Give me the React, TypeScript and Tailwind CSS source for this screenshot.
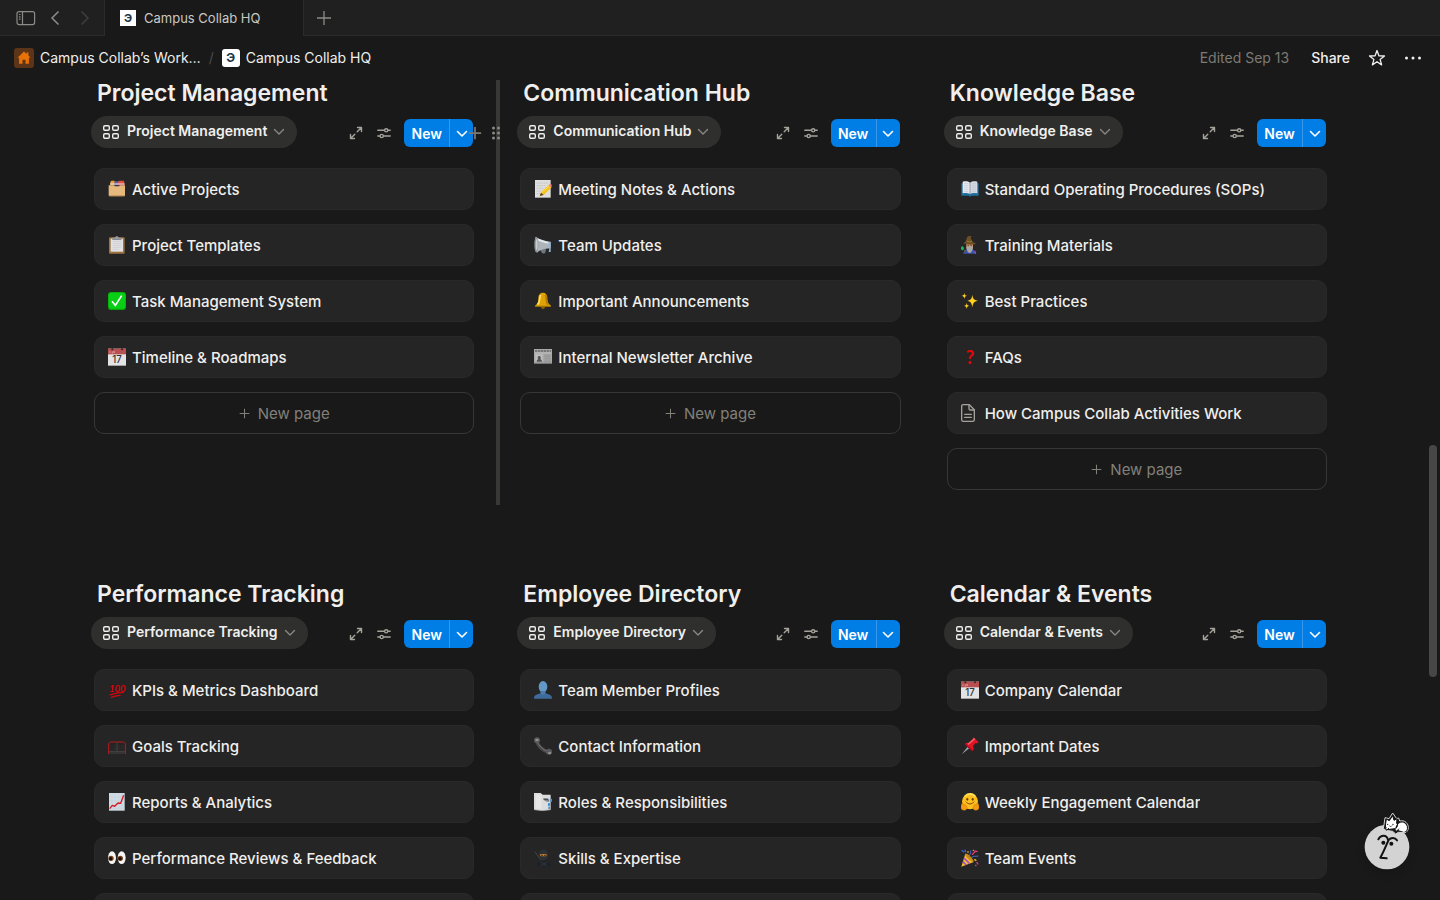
import type { ReactNode } from "react";

type Card = { icon: string; title: string };
type Board = { title: string; cards: Card[]; active?: boolean; more?: boolean };

const overview: Board[] = [
  {
    title: "Project Management",
    cards: [
      { icon: "dividers", title: "Active Projects" },
      { icon: "clipboard", title: "Project Templates" },
      { icon: "check", title: "Task Management System" },
      { icon: "calendar", title: "Timeline & Roadmaps" },
    ],
  },
  {
    title: "Communication Hub",
    active: true,
    cards: [
      { icon: "memo", title: "Meeting Notes & Actions" },
      { icon: "megaphone", title: "Team Updates" },
      { icon: "bell", title: "Important Announcements" },
      { icon: "newspaper", title: "Internal Newsletter Archive" },
    ],
  },
  {
    title: "Knowledge Base",
    cards: [
      { icon: "book", title: "Standard Operating Procedures (SOPs)" },
      { icon: "wizard", title: "Training Materials" },
      { icon: "sparkles", title: "Best Practices" },
      { icon: "question", title: "FAQs" },
      { icon: "page", title: "How Campus Collab Activities Work" },
    ],
  },
];

const people: Board[] = [
  {
    title: "Performance Tracking",
    more: true,
    cards: [
      { icon: "hundred", title: "KPIs & Metrics Dashboard" },
      { icon: "goal", title: "Goals Tracking" },
      { icon: "chart", title: "Reports & Analytics" },
      { icon: "eyes", title: "Performance Reviews & Feedback" },
    ],
  },
  {
    title: "Employee Directory",
    more: true,
    cards: [
      { icon: "person", title: "Team Member Profiles" },
      { icon: "phone", title: "Contact Information" },
      { icon: "tabs", title: "Roles & Responsibilities" },
      { icon: "ninja", title: "Skills & Expertise" },
    ],
  },
  {
    title: "Calendar & Events",
    more: true,
    cards: [
      { icon: "calendar", title: "Company Calendar" },
      { icon: "pin", title: "Important Dates" },
      { icon: "hug", title: "Weekly Engagement Calendar" },
      { icon: "party", title: "Team Events" },
    ],
  },
];

const art: Record<string, ReactNode> = {
  dividers: (
    <>
      <path d="M7 16V6l3-4h10v14z" fill="#f0a03c" />
      <path d="M20 4h14v12H20z" fill="#5b62c4" />
      <path d="M30 6l4-4h14l2 14H30z" fill="#e2523f" />
      <path d="M6 12h44" stroke="#e9e4ee" strokeWidth="3" />
      <path d="M2 16h16l3 3h12l3-3h15v30a3 3 0 0 1-3 3H5a3 3 0 0 1-3-3z" fill="#e5b87d" />
      <path d="M3 47h47" stroke="#c49357" strokeWidth="3" />
    </>
  ),
  clipboard: (
    <>
      <rect x="3" y="4" width="47" height="49" rx="3" fill="#9b7440" />
      <rect x="8" y="8" width="37" height="39" fill="#e2e2e4" />
      <path d="M13 16h27M13 22h27M13 28h27M13 34h27M13 40h20" stroke="#c9c9cd" strokeWidth="2" />
      <path d="M13 11V5h8c0-6 11-6 11 0h8v6z" fill="#9a9da3" />
      <path d="M13 10h27" stroke="#6e7177" strokeWidth="2" />
    </>
  ),
  check: (
    <>
      <rect width="54" height="54" rx="9" fill="#06a806" />
      <rect x="2" y="2" width="50" height="48" rx="8" fill="#08cf16" />
      <path d="M12 28l10 12L41 11" fill="none" stroke="#fff" strokeWidth="5" />
    </>
  ),
  calendar: (
    <>
      <path d="M0 2h54v51H0z" fill="#e3e3e5" />
      <path d="M0 2h54v17H0z" fill="#b84f50" />
      <path d="M6 15V9M11 15h4V9M19 9v6" stroke="#e9b4b4" strokeWidth="2" fill="none" />
      <circle cx="13" cy="4" r="3" fill="#3b2022" />
      <circle cx="42" cy="4" r="3" fill="#3b2022" />
      <text x="27" y="46" textAnchor="middle" fontSize="29" fontWeight="500" fill="#333" fontFamily="Inter, sans-serif">17</text>
    </>
  ),
  memo: (
    <>
      <rect x="3" y="0" width="47" height="53" fill="#dededf" />
      <path d="M8 9h36M8 17h28M8 25h20M8 33h14M8 41h10" stroke="#b6b6ba" strokeWidth="2" strokeDasharray="5 2" />
      <path d="M18 47l4-12 23-21 8 8-23 22z" fill="#f6c21c" />
      <path d="M20 41l26-23" stroke="#ffdf5c" strokeWidth="3" />
      <path d="M44 15l4-3c4-1 6 3 5 7l-3 3z" fill="#ef7f86" />
      <path d="M17 48l4-10 8 7z" fill="#584121" />
    </>
  ),
  megaphone: (
    <>
      <path d="M20 36l16 2c0 12-5 17-10 14-4-2-7-7-6-16z" fill="#6d7782" />
      <path d="M4 2c12 7 26 12 46 15v20C30 38 18 42 9 50z" fill="#aeb4ba" />
      <path d="M8 8c12 7 24 10 38 13" stroke="#e7eaed" strokeWidth="5" fill="none" />
      <ellipse cx="7" cy="26" rx="6" ry="24" fill="#8b9198" />
      <ellipse cx="8" cy="26" rx="3" ry="17" fill="#c9cdd1" />
      <path d="M42 19l8-1v30h-6c3-11 3-18-2-29z" fill="#8fb9dc" />
    </>
  ),
  bell: (
    <>
      <circle cx="27" cy="45" r="6" fill="#8e6403" />
      <path d="M27 2c8 0 13 6 13 16 0 13 4 18 10 22v5H4v-5c6-4 9-9 9-22C13 8 19 2 27 2z" fill="#e0a307" />
      <path d="M20 9c-4 8-1 20-9 29" stroke="#ffe16a" strokeWidth="5" fill="none" />
      <path d="M34 9c5 10 0 18 8 30" stroke="#b47903" strokeWidth="5" fill="none" />
      <path d="M4 43h46" stroke="#8e6403" strokeWidth="3" />
    </>
  ),
  newspaper: (
    <>
      <path d="M0 3h54v45H0z" fill="#a8a8a8" />
      <path d="M3 9h48" stroke="#666" strokeWidth="4" strokeDasharray="7 2" />
      <path d="M2 15h50" stroke="#ccc" strokeWidth="2" />
      <rect x="4" y="19" width="22" height="22" fill="#bdbdbd" />
      <path d="M8 41c0-5 3-7 5-7-4-5-1-10 3-10s6 5 3 10c3 0 5 3 5 7z" fill="#555" />
      <path d="M31 21h19M31 26h19M31 31h19M31 36h19M31 41h19" stroke="#8c8c8c" strokeWidth="2" />
      <path d="M0 46h54" stroke="#6b6b6b" strokeWidth="3" />
    </>
  ),
  book: (
    <>
      <path d="M1 10h52v37H31l-4 3-4-3H1z" fill="#216f9c" />
      <path d="M5 5c9-2 16-1 22 3v34c-6-4-13-4-22-2z" fill="#e8eaf0" />
      <path d="M49 5c-9-2-16-1-22 3v34c6-4 13-4 22-2z" fill="#d7dae4" />
      <path d="M9 11h13M9 17h13M9 23h13M9 29h13M9 35h13M32 11h13M32 17h13M32 23h13M32 29h13M32 35h13" stroke="#bcc1cf" strokeWidth="2" />
      <path d="M27 8v35" stroke="#70798b" strokeWidth="2" />
    </>
  ),
  wizard: (
    <>
      <path d="M7 53c1-10 8-14 18-14s19 4 20 14z" fill="#3b55ad" />
      <path d="M16 22h20v15c-3 7-16 7-20 0z" fill="#c99570" />
      <path d="M16 33c5-3 15-3 20 0-1 11-5 18-10 18s-9-7-10-18z" fill="#aaa8a6" />
      <path d="M20 29h3M29 29h3" stroke="#382116" strokeWidth="3" />
      <path d="M7 22c7-4 9-9 11-18 3-4 9-5 14-3l-3 4c3 7 5 13 13 16l3 3c-12 3-27 3-38-2z" fill="#6b5026" />
      <path d="M17 15c6 3 12 3 16 0" stroke="#a1782f" strokeWidth="3" fill="none" />
      <path d="M5 32l8 18" stroke="#6c4e2c" strokeWidth="3" />
      <ellipse cx="4" cy="37" rx="4" ry="6" fill="#19ba66" />
      <path d="M41 45l3 8" stroke="#8f51b6" strokeWidth="4" />
    </>
  ),
  sparkles: (
    <g fill="#ffcf22">
      <path d="M34 8c2 12 4 16 17 18-13 3-15 7-17 20-2-13-4-17-15-20 11-2 13-6 15-18z" />
      <path d="M10 2c1 7 2 8 8 9-6 2-7 3-8 10-1-7-2-8-8-10 6-1 7-2 8-9z" />
      <path d="M17 32c1 7 2 8 8 9-6 2-7 3-8 10-1-7-2-8-8-10 6-1 7-2 8-9z" />
    </g>
  ),
  question: (
    <text x="27" y="47" textAnchor="middle" fontSize="55" fontWeight="700" fill="#e60505" fontFamily="Lato, sans-serif">?</text>
  ),
  page: (
    <g fill="none" stroke="#a5a29a" strokeWidth="4" strokeLinejoin="round" strokeLinecap="round">
      <path d="M7 2h18l15 15v30a5 5 0 0 1-5 5H7a5 5 0 0 1-5-5V7a5 5 0 0 1 5-5z" />
      <path d="M24 3v11a4 4 0 0 0 4 4h11M11 31h20M11 40h20" />
    </g>
  ),
  hundred: (
    <>
      <text x="28" y="32" textAnchor="middle" fontSize="29" fontWeight="700" fontStyle="italic" fill="#d3060e" fontFamily="Lato, sans-serif">100</text>
      <path d="M6 42c12-5 24-7 40-8M10 49c9-4 17-5 26-6" stroke="#d3060e" strokeWidth="4" fill="none" strokeLinecap="round" />
    </>
  ),
  goal: (
    <>
      <path d="M5 40l7-21h30l7 21z" fill="#232323" />
      <path d="M12 20v20M20 20v20M34 20v20M42 20v20M6 28h42M6 35h42" stroke="#393939" strokeWidth="1" />
      <path d="M27 18v24" stroke="#555" strokeWidth="2" />
      <path d="M4 48h46M3 43h48" stroke="#555" strokeWidth="2" />
      <path d="M2 51V21c0-4 4-6 8-6h34c4 0 8 2 8 6v30" stroke="#bd1a1d" strokeWidth="3" fill="none" />
    </>
  ),
  chart: (
    <>
      <rect x="3" y="0" width="47" height="53" fill="#cfdae3" />
      <path d="M12 0v53M22 0v53M32 0v53M42 0v53M3 12h47M3 24h47M3 36h47M3 46h47" stroke="#bccad5" strokeWidth="1" />
      <path d="M5 47l8-10 7 3 10-10 8 1L47 7" stroke="#d51a24" strokeWidth="4" fill="none" strokeLinejoin="round" />
    </>
  ),
  eyes: (
    <>
      <ellipse cx="12" cy="26" rx="12" ry="19" fill="#f7f5f1" />
      <ellipse cx="41" cy="26" rx="12" ry="19" fill="#f7f5f1" />
      <circle cx="9" cy="28" r="8" fill="#76431a" />
      <circle cx="37" cy="28" r="8" fill="#76431a" />
      <circle cx="8" cy="29" r="5" fill="#160c06" />
      <circle cx="36" cy="29" r="5" fill="#160c06" />
    </>
  ),
  person: (
    <>
      <path d="M0 53c0-10 5-12 20-16V27h14v10c15 4 20 6 20 16z" fill="#3d6b9b" />
      <ellipse cx="27" cy="17" rx="13" ry="17" fill="#6398c6" />
      <path d="M20 30v8c4 4 10 4 14 0v-8z" fill="#4b7cab" />
    </>
  ),
  phone: (
    <>
      <path d="M7 9c4 17 19 31 38 37" stroke="#4a4a4c" strokeWidth="10" fill="none" />
      <path d="M10 15c5 12 16 22 29 28" stroke="#717174" strokeWidth="3" fill="none" />
      <ellipse cx="9" cy="10" rx="9" ry="9" fill="#59595b" />
      <ellipse cx="9" cy="9" rx="5" ry="4" fill="#8e8e90" />
      <ellipse cx="45" cy="44" rx="9" ry="9" fill="#59595b" />
      <ellipse cx="47" cy="48" rx="5" ry="4" fill="#8e8e90" />
    </>
  ),
  tabs: (
    <>
      <path d="M0 0h20l6 5h24v45l-25 3-25-3z" fill="#dcdcdc" />
      <path d="M5 5h17v43H5z" fill="#e6e6e6" />
      <path d="M27 16h15l4 4v6h-8l-8-4z" fill="#84888c" />
      <path d="M29 19h11l3 3" stroke="#45494d" strokeWidth="3" fill="none" />
      <path d="M49 17h5v9h-5zM42 30h6v9h-6zM43 41h5v7h-5z" fill="#3795e2" />
      <path d="M0 50l25 3 25-3" stroke="#aaa" strokeWidth="2" fill="none" />
    </>
  ),
  ninja: (
    <>
      <path d="M3 8l22 32" stroke="#43484c" strokeWidth="3" />
      <path d="M9 52c0-14 7-20 19-20s21 6 22 20z" fill="#1e2226" />
      <ellipse cx="28" cy="18" rx="14" ry="17" fill="#2c3136" />
      <rect x="18" y="15" width="20" height="7" rx="3" fill="#c07a2c" />
      <path d="M22 19h4M31 19h4" stroke="#1b120a" strokeWidth="3" />
      <path d="M17 37l22 14M41 38L20 51" stroke="#3b4147" strokeWidth="2" />
    </>
  ),
  pin: (
    <>
      <path d="M2 52l18-23 5 5z" fill="#98a4ad" />
      <path d="M12 20c5-4 10-3 15-1l9-9c-1-4-1-7 2-9l15 15c-3 3-6 3-9 2l-8 9c3 6 3 11-2 15z" fill="#df1526" />
      <path d="M21 22l20-17" stroke="#ff5b62" strokeWidth="5" />
      <path d="M13 22l21 19" stroke="#a50d1a" strokeWidth="4" />
    </>
  ),
  hug: (
    <>
      <circle cx="27" cy="25" r="24" fill="#fdbf1e" />
      <path d="M11 11c9-11 24-11 32 0" stroke="#ffe05a" strokeWidth="5" fill="none" />
      <ellipse cx="19" cy="19" rx="3" ry="4" fill="#6b3e09" />
      <ellipse cx="35" cy="19" rx="3" ry="4" fill="#6b3e09" />
      <path d="M15 27c7 8 17 8 24 0" stroke="#8c4b0b" strokeWidth="3" fill="none" strokeLinecap="round" />
      <path d="M2 32c3-4 5-1 6 4 3-4 7-1 8 3 4 2 3 12-5 13-8 0-13-4-11-13zM52 32c-3-4-5-1-6 4-3-4-7-1-8 3-4 2-3 12 5 13 8 0 13-4 11-13z" fill="#f49b13" stroke="#b86a08" strokeWidth="1" />
    </>
  ),
  party: (
    <>
      <path d="M13 14l25 25L1 53z" fill="#f6bf27" />
      <path d="M9 27l17 17M5 38l11 10" stroke="#a34bd0" strokeWidth="5" />
      <ellipse cx="25" cy="26" rx="5" ry="17" transform="rotate(-45 25 26)" fill="#c98a1c" />
      <path d="M25 24c-1-8 6-10 4-19M31 27c5-7 8-4 21-6" stroke="#4b72d8" strokeWidth="3" fill="none" />
      <path d="M34 18c1-7 8-5 8-12l8 2" stroke="#df3c75" strokeWidth="4" fill="none" />
      <path d="M2 4l8 6M12 2l2 7" stroke="#3f64d7" strokeWidth="4" />
      <path d="M40 31l6 4M20 7l2 4M36 3l2 2" stroke="#efc21e" strokeWidth="4" />
      <path d="M47 39l4 7M43 48l3 3" stroke="#cf3f8d" strokeWidth="4" />
    </>
  ),
};

function Emoji({ name }: { name: string }) {
  return (
    <svg viewBox="0 0 54 54" className="size-[18px] shrink-0" aria-hidden="true">
      {art[name]}
    </svg>
  );
}

function Chevron({ className }: { className: string }) {
  return (
    <svg viewBox="0 0 12 8" className={className} fill="none" stroke="currentColor" strokeLinecap="round" strokeLinejoin="round" aria-hidden="true">
      <path d="M1.5 1.5L6 6l4.5-4.5" />
    </svg>
  );
}

function Plus({ className }: { className: string }) {
  return (
    <svg viewBox="0 0 16 16" className={className} fill="none" stroke="currentColor" aria-hidden="true">
      <path d="M8 1v14M1 8h14" />
    </svg>
  );
}

function BoardColumn({ board }: { board: Board }) {
  return (
    <section className="relative min-w-0 pb-[15px]">
      {board.active && (
        <>
          <div className="absolute inset-y-0 -left-6 w-1 bg-[#383836]" />
          <button aria-label="Add block" className="absolute top-[46px] -left-[52px] text-[#7b7871]">
            <Plus className="size-[14px] stroke-2" />
          </button>
          <button aria-label="Drag column" className="absolute top-[45px] -left-[29px] text-[#8b8983]">
            <svg viewBox="0 0 10 16" className="h-4 w-[10px]" fill="currentColor" aria-hidden="true">
              <circle cx="2.5" cy="3" r="1.5" />
              <circle cx="7.5" cy="3" r="1.5" />
              <circle cx="2.5" cy="8" r="1.5" />
              <circle cx="7.5" cy="8" r="1.5" />
              <circle cx="2.5" cy="13" r="1.5" />
              <circle cx="7.5" cy="13" r="1.5" />
            </svg>
          </button>
        </>
      )}
      <h2 className="px-[3px] text-[23px] leading-[26px] font-semibold text-[#f0efed]">{board.title}</h2>
      <div className="mt-[10px] -ml-[3px] flex items-start justify-between pr-px">
        <button className="flex h-8 items-center rounded-full bg-[#2f2f2d] pr-3 pl-3 text-sm font-semibold text-[#f0efed]">
          <svg viewBox="0 0 16 16" className="mr-2 size-4" fill="none" stroke="currentColor" strokeWidth="1.4" aria-hidden="true">
            <rect x="0.7" y="1.7" width="5.6" height="4.6" rx="1.3" />
            <rect x="9.7" y="1.7" width="5.6" height="4.6" rx="1.3" />
            <rect x="0.7" y="9.7" width="5.6" height="4.6" rx="1.3" />
            <rect x="9.7" y="9.7" width="5.6" height="4.6" rx="1.3" />
          </svg>
          <span className="pb-0.5">{board.title}</span>
          <Chevron className="ml-1.5 h-2 w-3 stroke-[1.3] text-[#8d8a84]" />
        </button>
        <div className="mt-[3px] flex items-center text-[#a5a29a]">
          <button aria-label="Open full page" className="flex size-7 items-center justify-center">
            <svg viewBox="0 0 14 14" className="size-[14px]" fill="none" stroke="currentColor" strokeWidth="1.4" strokeLinecap="round" strokeLinejoin="round" aria-hidden="true">
              <path d="M8.200 5.800l4-4M8.500 1.500h4v4M5.800 8.200l-4 4M1.500 8.500v4h4" />
            </svg>
          </button>
          <button aria-label="View settings" className="flex size-7 items-center justify-center">
            <svg viewBox="0 0 14 14" className="size-[14px]" fill="none" stroke="currentColor" strokeWidth="1.4" strokeLinecap="round" aria-hidden="true">
              <path d="M.8 4.300h6.500M11.200 4.300h2M.8 10h2M6.700 10h6.500" />
              <circle cx="9.2" cy="4.3" r="1.6" />
              <circle cx="4.7" cy="10" r="1.6" />
            </svg>
          </button>
          <div className="ml-1.5 flex h-7 overflow-hidden rounded-md bg-[#007ee6] text-white">
            <button className="w-[46px] border-r border-[#3998ec] pt-0.5 text-sm font-semibold">New</button>
            <button aria-label="New page options" className="flex w-[23px] items-center justify-center">
              <Chevron className="mt-0.5 h-2 w-3 stroke-[1.6]" />
            </button>
          </div>
        </div>
      </div>
      <div className="mt-5 flex flex-col gap-[14px]">
        {board.cards.map((card) => (
          <a key={card.title} href="#" className="flex h-[42px] items-center gap-1.5 rounded-[10px] border border-[#292929] bg-[#252525] px-[13px] text-[15px] font-medium text-[#f0efed]">
            <Emoji name={card.icon} />
            <span className="truncate pt-0.5">{card.title}</span>
          </a>
        ))}
        {board.more ? (
          <div className="h-[42px] rounded-[10px] border border-[#292929] bg-[#252525]" />
        ) : (
          <button className="flex h-[42px] items-center justify-center gap-2 rounded-[10px] border border-[#373737] text-[15px] text-[#82807a]">
            <Plus className="size-[11px] stroke-[1.5]" />
            <span className="pt-[3px]">New page</span>
          </button>
        )}
      </div>
    </section>
  );
}

function BoardRow({ boards }: { boards: Board[] }) {
  return (
    <div className="grid shrink-0 grid-cols-3 gap-[46px]">
      {boards.map((board) => (
        <BoardColumn key={board.title} board={board} />
      ))}
    </div>
  );
}

function TabBar() {
  return (
    <nav className="flex h-9 shrink-0 bg-[#202020] text-[#8c8b88]">
      <div className="flex w-[105px] items-center border-r border-b border-[#2b2b2b] pl-4">
        <button aria-label="Toggle sidebar">
          <svg viewBox="0 0 20 16" className="h-4 w-5" fill="none" stroke="currentColor" strokeWidth="1.2" aria-hidden="true">
            <rect x="1" y="1.6" width="17.6" height="13" rx="2" />
            <path d="M6.500 1.600v13M3 4.500h1.500M3 6.800h1.500M3 9.100h1.500" />
          </svg>
        </button>
        <button aria-label="Back" className="ml-[14px]">
          <svg viewBox="0 0 10 16" className="h-4 w-[10px]" fill="none" stroke="currentColor" strokeWidth="1.5" aria-hidden="true">
            <path d="M8.500 1.500L2 8l6.500 6.500" />
          </svg>
        </button>
        <button aria-label="Forward" className="ml-5 text-[#3e3e3e]">
          <svg viewBox="0 0 10 16" className="h-4 w-[10px]" fill="none" stroke="currentColor" strokeWidth="1.5" aria-hidden="true">
            <path d="M1.500 1.500L8 8l-6.500 6.500" />
          </svg>
        </button>
      </div>
      <a href="#" className="flex w-[198px] items-center gap-2 bg-[#191919] pl-[15px] text-[13px] text-[#c9c8c5]">
        <span className="flex size-4 items-center justify-center bg-white text-[11px] leading-none font-bold text-[#213545]">Э</span>
        <span className="pt-0.5">Campus Collab HQ</span>
      </a>
      <div className="flex flex-1 items-center border-b border-l border-[#2b2b2b] pl-3">
        <button aria-label="New tab">
          <Plus className="size-4 stroke-[1.3]" />
        </button>
      </div>
    </nav>
  );
}

function TopBar() {
  return (
    <header className="flex h-11 shrink-0 items-center pr-[18px] pl-[14px] text-sm text-[#f0efed]">
      <a href="#" className="flex items-center gap-1.5">
        <svg viewBox="0 0 20 20" className="size-5" aria-hidden="true">
          <rect width="20" height="20" rx="3" fill="#5c3418" />
          <path d="M10 3.500l2.600 2.400V4.400h1.800v3.100L16.500 9.700h-1.600v6h-3.400v-3.900h-3v3.900H5.100v-6H3.500z" fill="#e97208" />
        </svg>
        Campus Collab’s Work…
      </a>
      <span className="mx-2 text-[#4b4b4b]">/</span>
      <a href="#" className="flex items-center gap-1.5">
        <span className="flex size-[18px] items-center justify-center rounded-[3px] bg-white text-xs leading-none font-bold text-[#213545]">Э</span>
        Campus Collab HQ
      </a>
      <span className="ml-auto text-[#7c7a75]">Edited Sep 13</span>
      <button className="ml-[22px] font-medium">Share</button>
      <button aria-label="Favorite" className="ml-[18px]">
        <svg viewBox="0 0 18 18" className="size-[18px]" fill="none" stroke="currentColor" strokeWidth="1.3" strokeLinejoin="round" aria-hidden="true">
          <path d="M9 1.500l1.900 5.300 5.600.2-4.400 3.400 1.500 5.500L9 12.700l-4.600 3.200 1.500-5.500L1.500 7l5.600-.2z" />
        </svg>
      </button>
      <button aria-label="More" className="ml-[18px]">
        <svg viewBox="0 0 18 18" className="size-[18px]" fill="currentColor" aria-hidden="true">
          <circle cx="2.5" cy="9" r="1.5" />
          <circle cx="9" cy="9" r="1.5" />
          <circle cx="15.5" cy="9" r="1.5" />
        </svg>
      </button>
    </header>
  );
}

function Assistant() {
  return (
    <button aria-label="Assistant" className="fixed right-[30px] bottom-[30px]">
      <svg viewBox="72 66 138 174" className="h-[58px] w-[46px] drop-shadow-lg" fill="none" strokeLinecap="round" strokeLinejoin="round" aria-hidden="true">
        <circle cx="141" cy="171" r="67" fill="#d3d3d3" />
        <g stroke="#111" strokeWidth="6">
          <path d="M115 148c4-10 17-14 24-8 2 2 4 5 5 9" />
          <path d="M171 151c-6-10-19-9-25-1-5 9-12 30-25 53l19 2" />
        </g>
        <circle cx="130" cy="158" r="6" fill="#111" />
        <circle cx="154" cy="161" r="6" fill="#111" />
        <path d="M132 104l3-21 12 3 11-17 12 17 6-2 3 9c16-4 26 8 26 20 0 8-5 14-10 15l-20-1-8 5-9-8-20-3-7-5z" fill="#191919" stroke="#d3d3d3" strokeWidth="3" />
        <path d="M137 100l2-13 9 5 10-15 4 14 9-5-1 13c4 5 3 12-3 16l4 9 9-5 9-1 8 8c6-5 7-16 2-22-5-7-16-8-24-3l-5 6-3 9-19 2-11-5z" fill="#fff" stroke="#111" strokeWidth="3" />
        <path d="M176 101c10-8 24-2 24 12 0 6-3 11-8 13l-18-6z" fill="#fff" />
        <path d="M136 113l4 8 6-6M163 116l7 8 6-7" fill="#fff" stroke="#111" strokeWidth="3" />
        <circle cx="143" cy="103" r="2" fill="#111" />
        <circle cx="159" cy="103" r="2" fill="#111" />
        <path d="M149 108l4 2 3-3" stroke="#111" strokeWidth="2" />
      </svg>
    </button>
  );
}

export default function App() {
  return (
    <div className="flex h-screen flex-col overflow-hidden bg-[#191919] font-['Inter',sans-serif] antialiased">
      <TabBar />
      <TopBar />
      <main className="relative flex min-h-0 flex-1 flex-col gap-[76px] overflow-hidden pr-[113px] pl-[94px]">
        <BoardRow boards={overview} />
        <BoardRow boards={people} />
        <div className="absolute top-[365px] right-[3px] h-[232px] w-2 rounded-full bg-[#474747]" />
      </main>
      <Assistant />
    </div>
  );
}
